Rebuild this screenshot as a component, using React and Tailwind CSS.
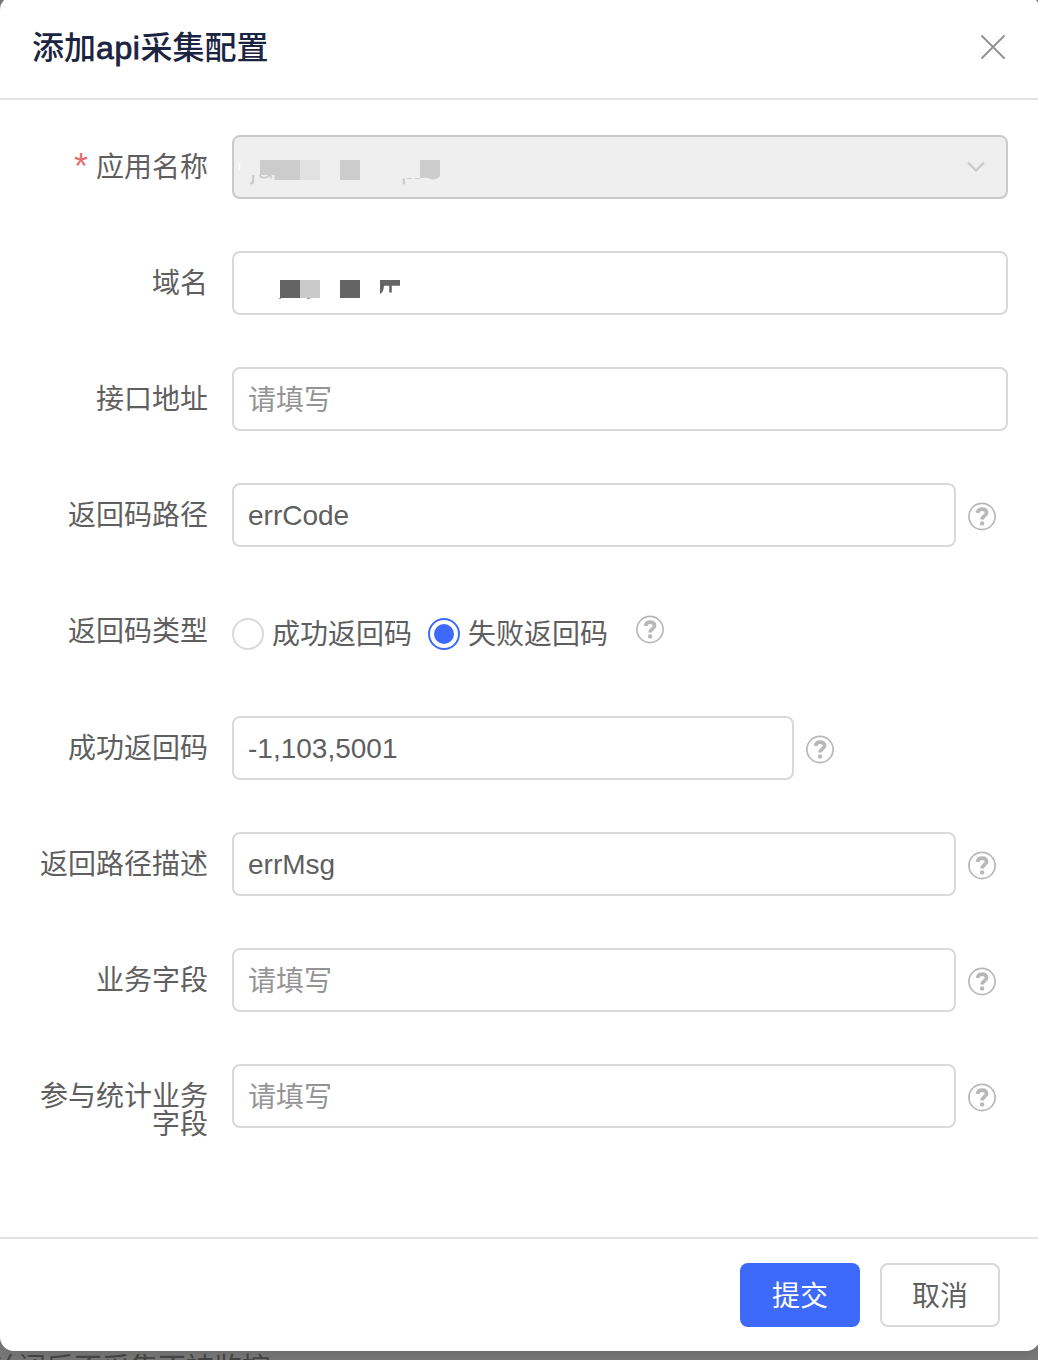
import clsx from 'clsx';

function HelpIcon({ className }) {
  return (
    <svg
      className={clsx('h-7 w-7 shrink-0 overflow-visible text-[#b8b8b8]', className)}
      fill="none"
      stroke="currentColor"
      viewBox="0 0 28 28"
    >
      <circle cx="14" cy="14.5" r="13.1" strokeWidth="1.7" />
      <path
        d="M9.6 11c.2-2.500 1.800-3.900 4.500-3.900s4.500 1.400 4.500 3.500c0 1.700-1 2.500-2.300 3.400-1.500 1-2.200 1.600-2.200 3.600"
        strokeWidth="3.7"
      />
      <circle cx="14.1" cy="21.400" fill="currentColor" r="2.200" stroke="none" />
    </svg>
  );
}

function CloseIcon() {
  return (
    <svg className="h-6 w-6" fill="none" stroke="#909090" strokeLinecap="round" strokeWidth="1.8" viewBox="0 0 24 24">
      <path d="M1 1l22 22M23 1L1 23" />
    </svg>
  );
}

function MaskedApp() {
  return (
    <svg className="h-15 w-50 overflow-visible" fill="#cccccc" viewBox="234 137 200 60">
      <rect fill="#fff" height="7" width="1.2" x="239" y="163" />
      <rect height="20" width="40" x="260" y="160" />
      <rect fill="#e1e1e1" height="20" width="20" x="300" y="160" />
      <rect height="20" width="20" x="340" y="160" />
      <path d="M420 160h20v16q-3 4-9 3-4-2-11-1z" />
      <path d="M253.2 175v5q0 3.6-3 3.600M403.8 178.500v5.800" fill="none" stroke="#c8c8c8" strokeWidth="2" />
      <path d="M407 178.500h5M415 178.500h5" stroke="#cfcfcf" />
      <path d="M259 175h15.500v5H259z" fill="#efefef" />
      <path
        d="M259.500 175q1.500 2.900 5 2.700 3.500-.2 5-2.700M270.800 175v3.500"
        fill="none"
        stroke="#cccccc"
        strokeWidth="1.800"
      />
    </svg>
  );
}

function MaskedDomain() {
  return (
    <svg className="h-15 w-50" fill="#646464" viewBox="234 253 200 60">
      <rect height="18" width="20" x="280" y="280" />
      <rect fill="#cacaca" height="18" width="20" x="300" y="280" />
      <rect height="18" width="20" x="340" y="280" />
      <path d="M380 280h20v5.700h-8.200v6.800h-2.600v-6.800h-5.200q-.4 6-3.500 8h-.5z" />
      <path d="M279 298.500h2M307 298.500h3" stroke="#999" />
    </svg>
  );
}

function FormRow({ label, required, children, className }) {
  return (
    <div className={clsx('flex items-start', className ?? 'h-[116px]')}>
      <div className="mr-6 w-[208px] shrink-0 pt-[19px] pl-10 text-right leading-7">
        {required && <span className="relative top-0.5 mr-2 text-[36px] leading-0 text-[#e5706f]">*</span>}
        {label}
      </div>
      {children}
    </div>
  );
}

function TextField({ width, defaultValue, placeholder }) {
  return (
    <input
      className={clsx(
        'h-16 rounded-lg border-2 border-[#d9d9d9] bg-white px-3.5 outline-none placeholder:text-[#949494]',
        placeholder ? 'pt-1' : 'pt-0.5',
        width,
      )}
      defaultValue={defaultValue}
      placeholder={placeholder}
      type="text"
    />
  );
}

function RadioOption({ label, checked }) {
  return (
    <label className="flex items-center gap-2">
      <span
        className={clsx(
          'flex h-8 w-8 items-center justify-center rounded-full border-2',
          checked ? 'border-[#3d6afa]' : 'border-[#d9d9d9]',
        )}
      >
        {checked && <span className="h-5 w-5 rounded-full bg-[#3d6afa]" />}
      </span>
      <span className="pt-0.5 leading-8">{label}</span>
    </label>
  );
}

export default function App() {
  return (
    <div className="relative h-[1360px] w-[1038px] overflow-hidden bg-[#7b7b7b] font-['Liberation_Sans','Noto_Sans_CJK_SC',sans-serif] text-[28px] font-normal text-[#5f5f5f]">
      <p className="absolute top-[1353px] left-[-10px] leading-8 whitespace-nowrap text-[#484848]">
        关闭后不采集不被监控
      </p>

      <div className="relative mt-[-4px] flex h-[1355px] w-[1040px] flex-col rounded-[14px] bg-white shadow-[0_4px_16px_rgba(0,0,0,0.15)]">
        <header className="flex h-[104px] shrink-0 items-center justify-between border-b-2 border-[#e3e3e3] pr-[35px] pl-8">
          <h2 className="pt-0.5 text-[32px] font-medium text-[#1b2440]">
            添加<span className="tracking-[0.6px] [-webkit-text-stroke:0.8px_#1b2440]">api</span>采集配置
          </h2>
          <button type="button">
            <CloseIcon />
          </button>
        </header>

        <main className="flex-1 pt-[35px]">
          <FormRow label="应用名称" required>
            <div className="flex h-16 w-[776px] items-center justify-between rounded-lg border-2 border-[#cacaca] bg-[#efefef] pr-5">
              <MaskedApp />
              <svg className="h-5 w-5" fill="none" stroke="#c8c8c8" strokeWidth="2.2" viewBox="0 0 20 20">
                <path d="M2 5.5l8 8 8-8" />
              </svg>
            </div>
          </FormRow>

          <FormRow label="域名">
            <div className="h-16 w-[776px] rounded-lg border-2 border-[#d9d9d9]">
              <MaskedDomain />
            </div>
          </FormRow>

          <FormRow label="接口地址">
            <TextField placeholder="请填写" width="w-[776px]" />
          </FormRow>

          <FormRow label="返回码路径">
            <TextField defaultValue="errCode" width="w-[724px]" />
            <HelpIcon className="mt-[19px] ml-3" />
          </FormRow>

          <FormRow className="h-[117px]" label="返回码类型">
            <div className="flex gap-4 pt-[18px]">
              <RadioOption label="成功返回码" />
              <RadioOption checked label="失败返回码" />
            </div>
            <HelpIcon className="mt-4 ml-7" />
          </FormRow>

          <FormRow label="成功返回码">
            <TextField defaultValue="-1,103,5001" width="w-[562px]" />
            <HelpIcon className="mt-[19px] ml-3" />
          </FormRow>

          <FormRow label="返回路径描述">
            <TextField defaultValue="errMsg" width="w-[724px]" />
            <HelpIcon className="mt-[19px] ml-3" />
          </FormRow>

          <FormRow label="业务字段">
            <TextField placeholder="请填写" width="w-[724px]" />
            <HelpIcon className="mt-[19px] ml-3" />
          </FormRow>

          <FormRow label="参与统计业务字段">
            <TextField placeholder="请填写" width="w-[724px]" />
            <HelpIcon className="mt-[19px] ml-3" />
          </FormRow>
        </main>

        <footer className="flex h-[114px] shrink-0 items-start justify-end gap-5 border-t-2 border-[#e3e3e3] pt-6 pr-10">
          <button className="h-16 w-[120px] rounded-lg bg-[#3d6afa] pt-1 text-white" type="button">
            提交
          </button>
          <button className="h-16 w-[120px] rounded-lg border-2 border-[#d9d9d9] pt-1" type="button">
            取消
          </button>
        </footer>
      </div>
    </div>
  );
}
